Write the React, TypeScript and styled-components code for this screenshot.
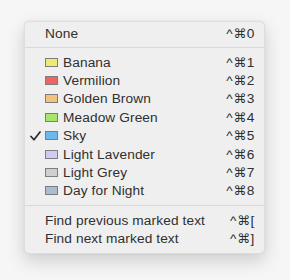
import React from "react";
import styled, {createGlobalStyle} from "styled-components";

const GlobalStyle = createGlobalStyle`
  html, body {
    margin: 0;
    padding: 0;
    background: #f6f6f6;
  }
  body {
    font-family: "Liberation Sans", Arial, "DejaVu Sans", sans-serif;
  }
`

const Page = styled.div`
  width: 290px;
  height: 280px;
  padding: 21px 0 0 24px;
  box-sizing: border-box;
`

const Menu = styled.div`
  width: 241px;
  padding: 2px 0 6px;
  box-sizing: border-box;
  background: #efefef;
  border-radius: 5px;
  border: 1px solid #dedede;
  box-shadow: 0 7px 18px rgba(0, 0, 0, 0.17), 0 0 2px rgba(0, 0, 0, 0.08);
`

const Row = styled.div<{ $h?: number }>`
  display: flex;
  align-items: center;
  height: ${p => p.$h || 18.4}px;
  padding: 0 9px 0 5px;
  font-size: 13.7px;
  letter-spacing: 0.1px;
  color: #303030;
`

const Check = styled.span`
  width: 15px;
  display: flex;
  align-items: center;
  justify-content: flex-start;
`

const Label = styled.span`
  flex: 1;
  display: flex;
  align-items: center;
  white-space: nowrap;
`

const Swatch = styled.span<{ $color: string }>`
  width: 11px;
  height: 7px;
  margin-right: 5px;
  background: ${p => p.$color};
  border: 1px solid #7d7d7d;
  flex-shrink: 0;
`

const Shortcut = styled.span`
  white-space: nowrap;
  letter-spacing: 0.6px;
`

const Cmd = styled.span`
  font-family: "DejaVu Sans", sans-serif;
  font-size: 13px;
`

const Separator = styled.div`
  height: 11px;
  display: flex;
  align-items: center;

  &::after {
    content: "";
    flex: 1;
    height: 1px;
    background: #d9d9d9;
  }
`

const colors = [
    {name: "Banana", color: "#eeeb72", key: "1"},
    {name: "Vermilion", color: "#ee6464", key: "2"},
    {name: "Golden Brown", color: "#f4c27e", key: "3"},
    {name: "Meadow Green", color: "#a9e46c", key: "4"},
    {name: "Sky", color: "#6bb8ee", key: "5", checked: true},
    {name: "Light Lavender", color: "#d4c9f3", key: "6"},
    {name: "Light Grey", color: "#cfcfcf", key: "7"},
    {name: "Day for Night", color: "#a9bcd4", key: "8"},
]

const CheckIcon = () => (
    <svg width="11" height="10" viewBox="0 0 11 10">
        <path d="M1 5.5 L4 8.8 L10 1" fill="none" stroke="#2a2a2a" strokeWidth="1.7" strokeLinecap="round" strokeLinejoin="round"/>
    </svg>
)

const Key: React.FC<{ k: string }> = ({k}) => (
    <Shortcut>^<Cmd>⌘</Cmd>{k}</Shortcut>
)

export default function App() {
    return (
        <Page>
            <GlobalStyle/>
            <Menu>
                <Row $h={18}>
                    <Check/>
                    <Label>None</Label>
                    <Key k="0"/>
                </Row>
                <Separator/>
                {colors.map(c => (
                    <Row key={c.name}>
                        <Check>{c.checked && <CheckIcon/>}</Check>
                        <Label><Swatch $color={c.color}/>{c.name}</Label>
                        <Key k={c.key}/>
                    </Row>
                ))}
                <Separator/>
                <Row $h={18}>
                    <Check/>
                    <Label>Find previous marked text</Label>
                    <Key k="["/>
                </Row>
                <Row $h={18}>
                    <Check/>
                    <Label>Find next marked text</Label>
                    <Key k="]"/>
                </Row>
            </Menu>
        </Page>
    )
}
